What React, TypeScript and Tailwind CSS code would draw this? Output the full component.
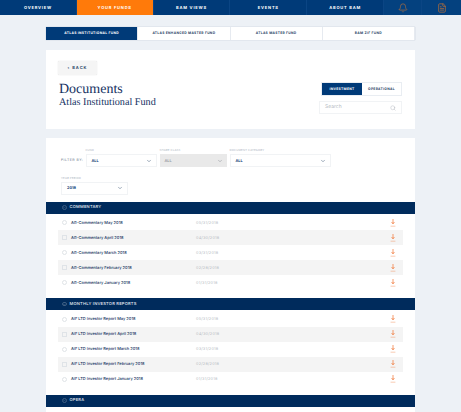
import React from 'react';
import { Bell, ChevronDown, FileText, Minus, Search } from 'lucide-react';

const navItems = ['OVERVIEW', 'YOUR FUNDS', 'BAM VIEWS', 'EVENTS', 'ABOUT BAM'];
const funds = ['ATLAS INSTITUTIONAL FUND', 'ATLAS ENHANCED MASTER FUND', 'ATLAS MASTER FUND', 'BAM ZIF FUND'];

const sections = [
  {
    title: 'COMMENTARY',
    rows: [
      ['AG-Commentary May 2018', '05/31/2018'],
      ['AG-Commentary April 2018', '04/30/2018'],
      ['AG-Commentary March 2018', '03/31/2018'],
      ['AG-Commentary February 2018', '02/28/2018'],
      ['AG-Commentary January 2018', '01/31/2018'],
    ],
  },
  {
    title: 'MONTHLY INVESTOR REPORTS',
    rows: [
      ['AIF LTD Investor Report May 2018', '05/31/2018'],
      ['AIF LTD Investor Report April 2018', '04/30/2018'],
      ['AIF LTD Investor Report March 2018', '03/31/2018'],
      ['AIF LTD Investor Report February 2018', '02/28/2018'],
      ['AIF LTD Investor Report January 2018', '01/31/2018'],
    ],
  },
];

const DownloadIcon = () => (
  <svg width="6" height="8" viewBox="0 0 6 8" className="text-[#f2844a]">
    <path d="M3 0v4.2M1.6 3 3 5l1.4-2" fill="none" stroke="currentColor" strokeWidth="0.8" />
    <path d="M0.6 7.2h4.8" stroke="currentColor" strokeWidth="0.9" opacity="0.45" />
  </svg>
);

const FilterSelect = ({ label, value, width, disabled = false }: { label: string; value: string; width: string; disabled?: boolean }) => (
  <div className={`flex flex-col ${width}`}>
    <span className="h-[7px] text-[2.8px] leading-[7px] tracking-[0.15px] text-[#aab2bd]">{label}</span>
    <div
      className={`flex h-[13px] items-center justify-between pl-[5px] pr-[4px] text-[3.8px] font-bold ${
        disabled ? 'bg-[#e9e9e9] text-[#9a9fa6]' : 'border border-[#f1f3f5] bg-white text-[#0b3a75]'
      }`}
    >
      <span>{value}</span>
      <ChevronDown size={6} strokeWidth={2} className={disabled ? 'text-[#8a8f96]' : 'text-[#3f5877]'} />
    </div>
  </div>
);

const Section = ({ title, rows }: { title: string; rows: string[][] }) => (
  <div>
    <div className="flex h-[12px] items-center bg-[#002b5c] pl-[16px] text-[4.1px] font-medium tracking-[0.2px] text-[#e6ecf3]">
      <span className="mr-[3px] flex h-[4.5px] w-[4.5px] items-center justify-center rounded-full border-[0.5px] border-[#3f5f83]">
        <Minus size={3} className="text-[#8ba0b8]" />
      </span>
      <span className="leading-none">{title}</span>
    </div>
    <div className="mx-[12px] pt-[1.5px] pb-[8px]">
      {rows.map(([name, date], i) => (
        <div key={name} className={`flex h-[15px] items-center pl-[4px] ${i % 2 === 1 ? 'bg-[#f4f4f4]' : ''}`}>
          <span className={`mr-[4px] h-[5px] w-[5px] border-[0.5px] border-[#dfe3e7] ${i % 2 === 0 ? 'rounded-full' : ''}`} />
          <span className="w-[125px] text-[4px] font-medium text-[#12315c]">{name}</span>
          <span className="text-[3.9px] tracking-[0.2px] text-[#b4bac2]">{date}</span>
          <span className="ml-auto mr-[7px] flex">
            <DownloadIcon />
          </span>
        </div>
      ))}
    </div>
  </div>
);

export default function App() {
  return (
    <div className="h-[412px] w-[461px] overflow-hidden bg-[#edf1f6] font-['Inter',sans-serif] [text-rendering:geometricPrecision]">
      <nav className="flex h-[15px] bg-[#003a78]">
        {navItems.map((item, i) => (
          <div
            key={item}
            className={`flex w-[76.8px] items-center justify-center border-r border-[#0b4584] text-[4px] font-bold tracking-[0.8px] text-white ${
              i === 1 ? 'bg-[#ff7a0a]' : ''
            }`}
          >
            {item}
          </div>
        ))}
        <div className="flex w-[38.5px] items-center justify-center border-r border-[#0b4584] bg-[#04417f]">
          <Bell size={10} strokeWidth={1.6} className="text-[#b8703a]" />
        </div>
        <div className="flex flex-1 items-center justify-center bg-[#04417f]">
          <FileText size={10} strokeWidth={1.8} className="text-[#b8703a]" />
        </div>
      </nav>

      <div className="mx-[46px] mt-[12px] flex h-[13px] bg-white shadow-[0_0_1px_rgba(0,40,90,0.25)]">
        {funds.map((fund, i) => (
          <div
            key={fund}
            className={`flex flex-1 items-center justify-center border-r border-[#e6eaf0] text-[3.3px] font-bold tracking-[0.3px] ${
              i === 0 ? 'bg-[#003a78] text-white' : 'text-[#2c4668]'
            }`}
          >
            {fund}
          </div>
        ))}
      </div>

      <section className="mx-[46px] mt-[10px] h-[79px] bg-white px-[12px] pt-[11px]">
        <div className="flex h-[14px] w-[39px] items-center justify-center rounded-[1px] bg-[#f5f5f5] text-[4px] font-bold tracking-[1px] text-[#2c4668] shadow-[0_0_1px_rgba(0,0,0,0.2)]">
          ‹ BACK
        </div>
        <div className="flex justify-between">
          <div className="pl-[1px] pt-[7px] font-['Liberation_Serif',serif] text-[#14315f]">
            <div className="text-[14px] leading-[15px]">Documents</div>
            <div className="text-[10.2px] leading-[12px]">Atlas Institutional Fund</div>
          </div>
          <div className="mr-[1px] flex w-[83px] flex-col items-end pt-[7px]">
            <div className="flex h-[14px] w-[81px] border border-[#e9edf2] text-[3.3px] font-bold tracking-[0.3px]">
              <div className="flex w-[40px] items-center justify-center bg-[#003a78] text-white">INVESTMENT</div>
              <div className="flex flex-1 items-center justify-center text-[#2c4668]">OPERATIONAL</div>
            </div>
            <div className="mt-[5px] flex h-[13px] w-[83px] items-center justify-between border border-[#f1f3f5] px-[5px] text-[5px] text-[#b5bbc3]">
              Search
              <Search size={6} strokeWidth={1.6} className="text-[#a9afb7]" />
            </div>
          </div>
        </div>
      </section>

      <section className="mx-[46px] mt-[9px] bg-white pt-[9px]">
        <div className="flex gap-[3px] pl-[15px]">
          <span className="mt-[11px] w-[21.5px] whitespace-nowrap text-[3.6px] tracking-[0.4px] text-[#6c7a8c]">FILTER BY:</span>
          <FilterSelect label="FUND" value="ALL" width="w-[71px]" />
          <FilterSelect label="SHARE CLASS" value="ALL" width="w-[67px]" disabled />
          <FilterSelect label="DOCUMENT CATEGORY" value="ALL" width="w-[101px]" />
        </div>
        <div className="mt-[7.5px] pl-[15px]">
          <FilterSelect label="YEAR PERIOD" value="2018" width="w-[67px]" />
        </div>
        <div className="mt-[7px]">
          {sections.map((s) => (
            <Section key={s.title} title={s.title} rows={s.rows} />
          ))}
          <Section title="OPERA" rows={[]} />
        </div>
      </section>
    </div>
  );
}
